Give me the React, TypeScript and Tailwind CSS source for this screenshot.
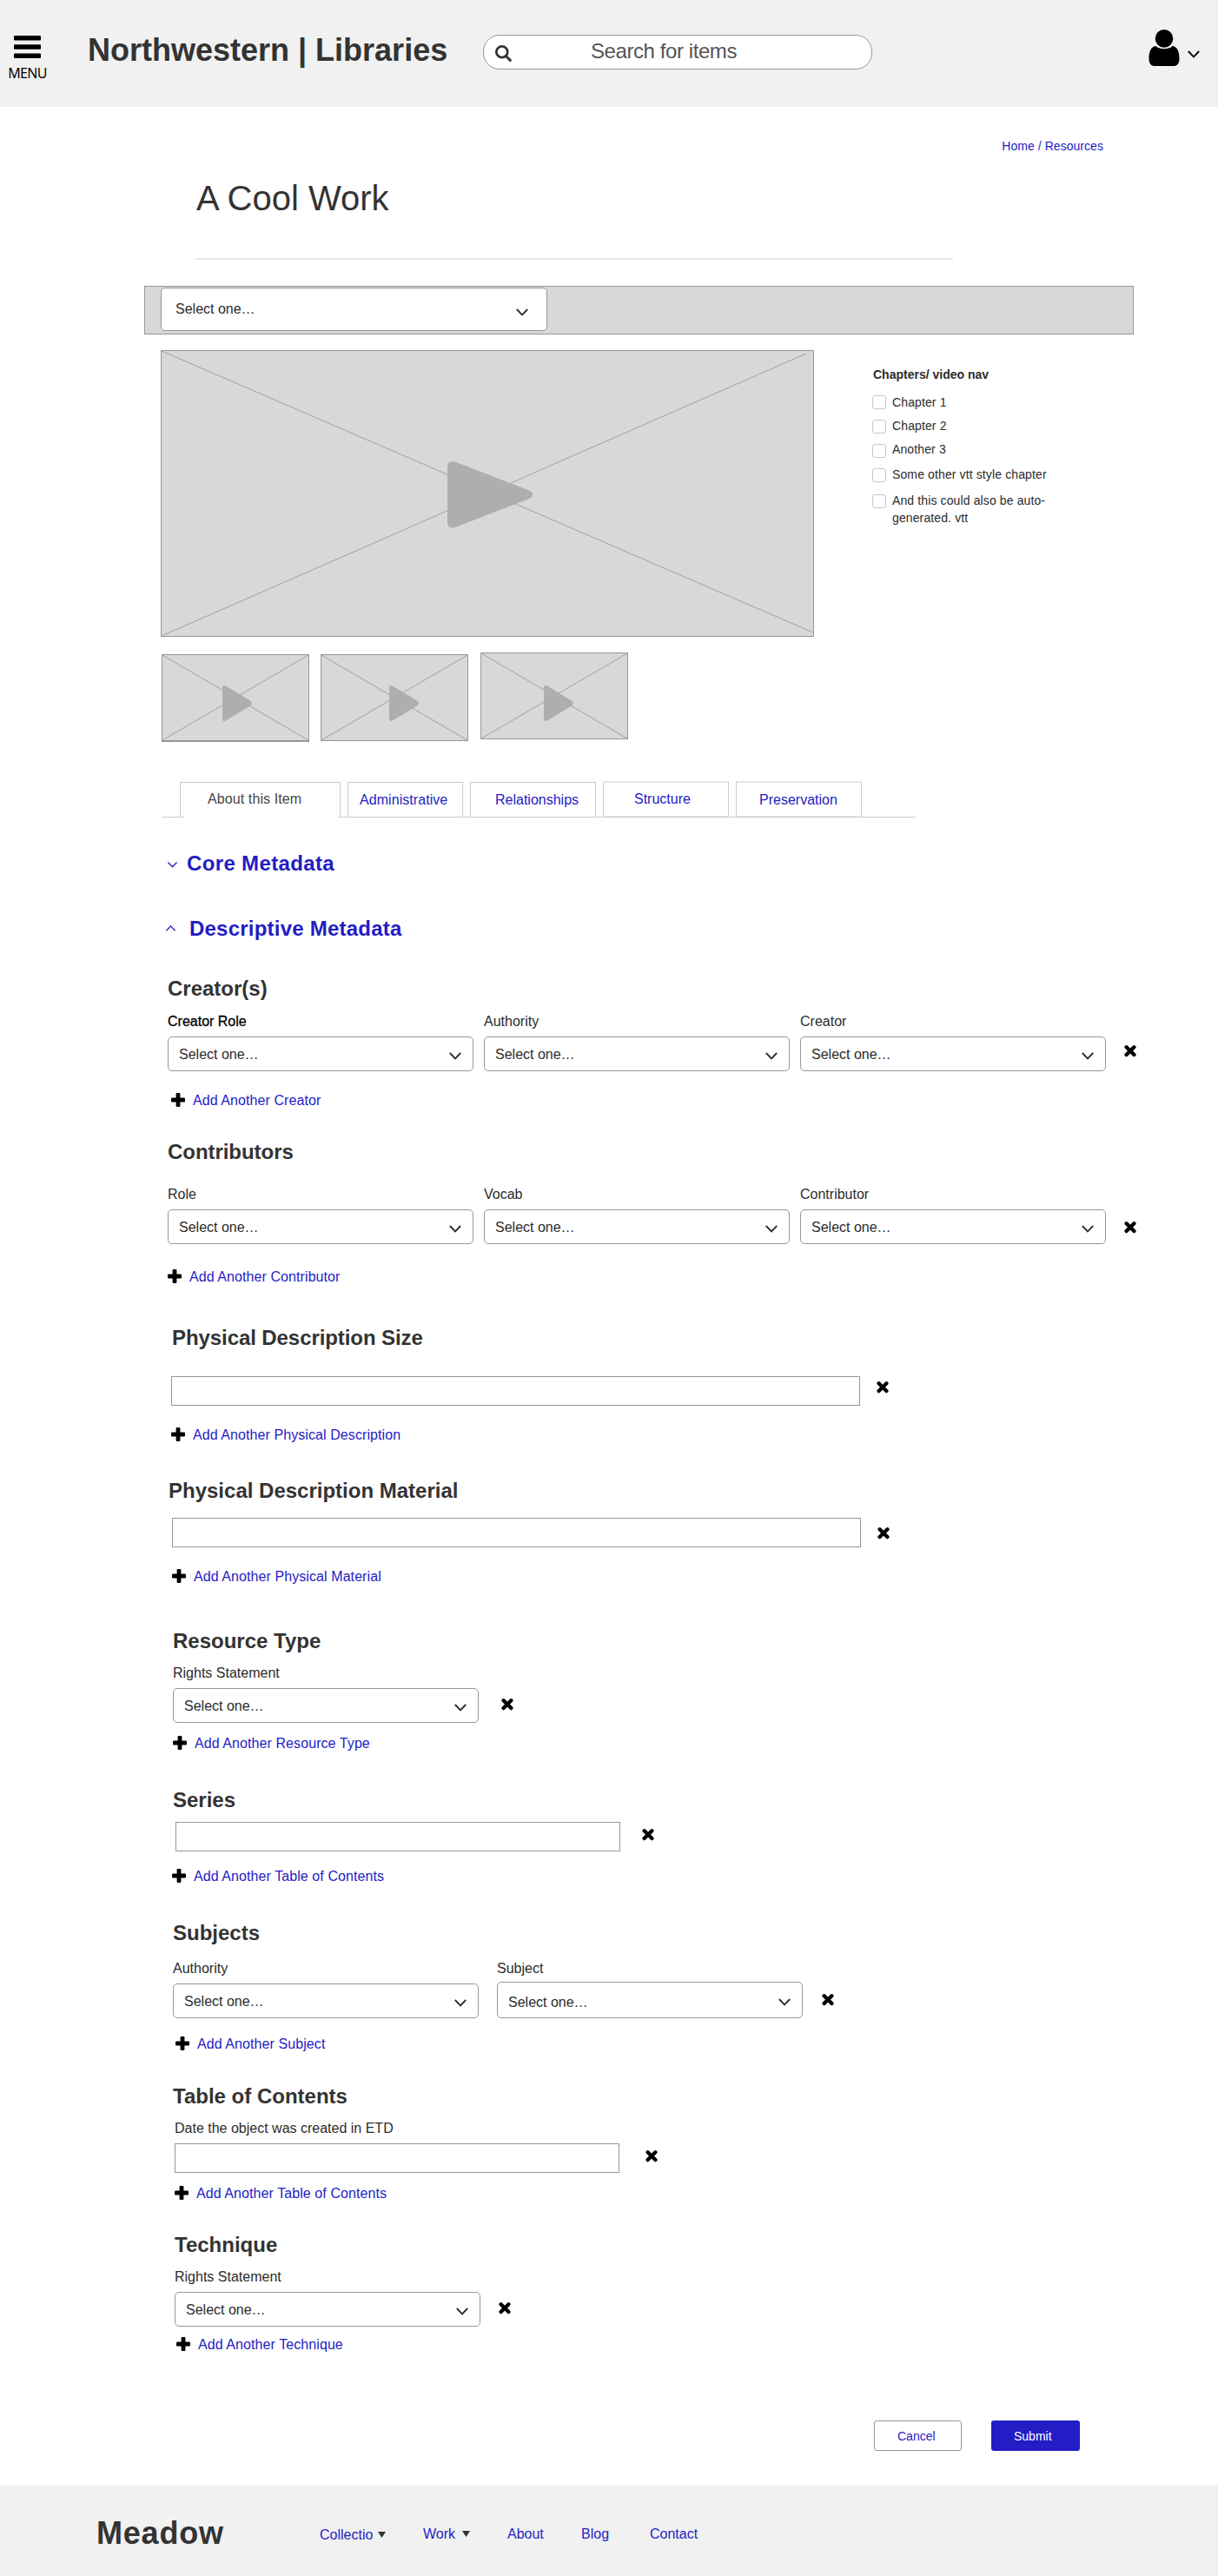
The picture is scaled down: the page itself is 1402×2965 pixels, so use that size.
import type { ReactNode } from "react";

function Chevron({ className = "" }: { className?: string }) {
  return (
    <svg className={`shrink-0 ${className}`} width="14" height="9" viewBox="0 0 14 9" fill="none" stroke="currentColor" strokeWidth="1.8">
      <path d="M0.8 1 L7 7.4 L13.2 1" />
    </svg>
  );
}

function PlusIcon() {
  return (
    <svg className="mt-px shrink-0" width="16" height="16" viewBox="0 0 16 16" fill="#000">
      <rect x="5.6" y="0" width="4.8" height="16" rx="1.2" />
      <rect x="0" y="5.6" width="16" height="4.8" rx="1.2" />
    </svg>
  );
}

function RemoveIcon({ className }: { className: string }) {
  return (
    <svg className={`shrink-0 ${className}`} width="14" height="14" viewBox="0 0 14 14" fill="none" stroke="#000">
      <path d="M2.6 2.3 L11.4 11.1 M11.4 2.3 L2.6 11.1" strokeWidth="4.3" strokeLinecap="round" />
    </svg>
  );
}

function Heading({ className, children }: { className: string; children: ReactNode }) {
  return <h3 className={`text-[24px] leading-[27px] font-bold text-[#333] ${className}`}>{children}</h3>;
}

function Label({ children, className = "" }: { children: ReactNode; className?: string }) {
  return <div className={`text-[16px] leading-[19px] ${className}`}>{children}</div>;
}

function Select({
  box = "h-10 w-[352px] pt-[10px] pr-[13px]",
  chevron = "mt-[7px]",
}: {
  box?: string;
  chevron?: string;
}) {
  return (
    <div className={`flex items-start justify-between rounded-[5px] border border-[#979797] bg-white pl-3 text-[16px] leading-[19px] ${box}`}>
      <span>Select one…</span>
      <Chevron className={chevron} />
    </div>
  );
}

function Field({ label, labelClass, children, className = "gap-2" }: { label: string; labelClass?: string; children: ReactNode; className?: string }) {
  return (
    <div className={`flex flex-col ${className}`}>
      <Label className={labelClass}>{label}</Label>
      {children}
    </div>
  );
}

function AddLink({ className, children }: { className: string; children: ReactNode }) {
  return (
    <a className={`flex items-start gap-[9px] text-[16px] leading-[19px] tracking-[0.08px] text-[#241cc4] ${className}`}>
      <PlusIcon />
      <span>{children}</span>
    </a>
  );
}

function Play({ d, className, size }: { d: string; className: string; size: [number, number] }) {
  return (
    <svg className={`absolute ${className}`} width={size[0]} height={size[1]} viewBox={`0 0 ${size[0]} ${size[1]}`}>
      <path d={d} fill="#aeaeae" />
    </svg>
  );
}

const smallPlay = "M0 2 Q0 0 2 0 Q3 0 4.2 .8 L32 17.4 Q36 20.5 32 23.6 L4.2 40.2 Q3 41 2 41 Q0 41 0 39 Z";
const largePlay = "M0 6 Q0 0 6 0 Q8 0 10 1 L93 33 Q98.5 36 98.5 38.3 Q98.5 41 93 43.6 L10 75.6 Q8 76.6 6 76.6 Q0 76.6 0 70.6 Z";

function Thumb({ box, play }: { box: string; play: string }) {
  return (
    <div className={`relative w-[170px] border border-[#979797] bg-[#d8d8d8] ${box}`}>
      <svg className="block" width="168" height="98" viewBox="0 0 168 98" stroke="#a0a0a0" strokeWidth="1">
        <path d="M0 0 L168 98 M0 98 L168 0" />
      </svg>
      <Play className={play} size={[35, 41]} d={smallPlay} />
    </div>
  );
}

function Spacer({ className }: { className: string }) {
  return <div className={`h-px bg-[#ccc] ${className}`} />;
}

function Tab({ className, children }: { className: string; children: ReactNode }) {
  return (
    <div className={`flex items-start border-[#ccc] text-[16px] leading-[19px] text-[#241cc4] ${className}`}>{children}</div>
  );
}

function Chapter({ row, box, text = "", children }: { row: string; box: string; text?: string; children: ReactNode }) {
  return (
    <div className={`flex items-start gap-[7px] ${row}`}>
      <span className={`size-4 shrink-0 rounded-[3px] border border-[#c8c8c8] bg-white ${box}`} />
      <span className={`text-[14px] tracking-[0.12px] whitespace-nowrap ${text || "leading-4"}`}>{children}</span>
    </div>
  );
}

function Caret({ className }: { className: string }) {
  return (
    <svg className={className} width="9" height="7" viewBox="0 0 9 7">
      <path d="M0 0 H9 L4.5 7 Z" fill="#333" />
    </svg>
  );
}

export default function App() {
  return (
    <div className="flex min-h-[2965px] w-[1402px] flex-col overflow-hidden bg-white font-['Liberation_Sans',Arial,sans-serif] text-[#2b2b2b]">
      <header className="flex h-[123px] items-start bg-[#f1f1f1]">
        <div className="mt-[41px] ml-[8px] flex w-[47px] flex-col items-center">
          <svg width="31" height="27" viewBox="0 0 31 27" fill="#000">
            <rect width="31" height="5.4" rx="1" />
            <rect y="10.3" width="31" height="5.4" rx="1" />
            <rect y="20.6" width="31" height="5.4" rx="1" />
          </svg>
          <span className="mt-[6px] font-['Noto_Sans',sans-serif] text-[16px] leading-[20px] tracking-[-0.7px] text-black">MENU</span>
        </div>
        <h1 className="mt-[37px] ml-[46px] w-[455px] text-[36px] leading-[41px] font-bold whitespace-nowrap text-[#333]">
          Northwestern | Libraries
        </h1>
        <div className="mt-10 flex h-10 w-[448px] items-start rounded-[19px] border border-[#979797] bg-white">
          <svg className="mt-[11px] ml-[13px]" width="19" height="19" viewBox="0 0 19 19" fill="none" stroke="#333">
            <circle cx="7.8" cy="7.8" r="6.4" strokeWidth="2.8" />
            <path d="M12.6 12.8 L17.3 17.4" strokeWidth="3" strokeLinecap="round" />
          </svg>
          <span className="mt-[4px] ml-[91px] text-[24px] leading-[27px] tracking-[-0.42px] text-[#555]">Search for items</span>
        </div>
        <svg className="mt-[34px] ml-[318px]" width="36" height="42" viewBox="0 0 36 42" fill="#000">
          <ellipse cx="18" cy="10.4" rx="10.3" ry="10.4" />
          <path d="M8.5 19 C11.5 23.2 24.5 23.2 27.5 19 C32.5 19.3 35.5 24.5 35.5 33.5 C35.5 39 33 42 29.5 42 H6.5 C3 42 .5 39 .5 33.5 C.5 24.5 3.5 19.3 8.5 19 Z" />
        </svg>
        <Chevron className="mt-[58px] ml-[9px] text-black" />
      </header>

      <nav className="mt-[37px] mr-[132px] self-end text-[14px] leading-4 tracking-[0.05px] text-[#241cc4]">Home / Resources</nav>
      <h2 className="mt-[30px] ml-[226px] text-[40px] leading-[44px] text-[#333]">A Cool Work</h2>
      <div className="mt-[47px] ml-[225px] h-[2px] w-[872px] bg-[#e6e6e6]" />

      <div className="mt-[30px] ml-[166px] h-14 w-[1139px] border border-[#979797] bg-[#d8d8d8] pt-px pl-[18px]">
        <Select box="h-[50px] w-[445px] pt-[14px] pl-4 pr-[21px]" chevron="mt-[9px]" />
      </div>

      <div className="mt-[18px] ml-[185px] flex h-[330px] items-start">
        <div className="relative h-[330px] w-[752px] border border-[#979797] bg-[#d8d8d8]">
          <svg className="block" width="750" height="328" viewBox="0 0 750 328" stroke="#a0a0a0">
            <path d="M0 0 L750 324 M0 328 L742 3" />
          </svg>
          <Play className="top-[127px] left-[329px]" size={[99, 77]} d={largePlay} />
        </div>
        <div className="mt-5 ml-[67px]">
          <div className="ml-px h-8 text-[14px] leading-4 font-bold">Chapters/ video nav</div>
          <Chapter row="h-[27px]" box="">Chapter 1</Chapter>
          <Chapter row="h-[27px]" box="mt-px">Chapter 2</Chapter>
          <Chapter row="h-[29px]" box="mt-[2px]">Another 3</Chapter>
          <Chapter row="h-[30px]" box="mt-px">Some other vtt style chapter</Chapter>
          <Chapter row="" box="mt-px" text="-mt-[2px] leading-5">
            And this could also be auto-
            <br />
            generated. vtt
          </Chapter>
        </div>
      </div>

      <div className="mt-[18px] ml-[186px] flex h-[103px] items-start">
        <Thumb box="mt-[2px] h-[101px] border-b-2" play="top-[35px] left-[69px]" />
        <Thumb box="mt-[2px] ml-[13px] h-[100px]" play="top-[35px] left-[78px]" />
        <Thumb box="ml-[14px] h-[100px]" play="top-[37px] left-[72px]" />
      </div>

      <div className="mt-[45px] ml-[187px] flex h-[42px] items-end">
        <Spacer className="w-5" />
        <div className="flex h-[41px] w-[185px] flex-col justify-between border-t border-[#ccc]">
          <div className="h-[39px] border-x border-[#ccc] pt-[9px] pl-[31px] text-[16px] leading-[19px] tracking-[0.1px] text-[#444]">About this Item</div>
          <div className="flex justify-between">
            <Spacer className="w-[5px]" />
            <Spacer className="w-[3px]" />
          </div>
        </div>
        <Spacer className="w-2" />
        <Tab className="h-[41px] w-[133px] border pt-[10px] pl-[13px] tracking-[0.06px]">Administrative</Tab>
        <Spacer className="w-2" />
        <Tab className="h-[41px] w-[145px] border pt-[10px] pl-[28px]">Relationships</Tab>
        <Spacer className="w-2" />
        <Tab className="h-[42px] w-[145px] border border-t-2 border-t-[#e6e6e6] pt-[9px] pl-[35px] shadow-[inset_0_-1px_#e6e6e6]">Structure</Tab>
        <Spacer className="w-2" />
        <Tab className="h-[42px] w-[145px] border border-t-2 border-t-[#e6e6e6] pt-[10px] pl-[26px] shadow-[inset_0_-1px_#e6e6e6]">Preservation</Tab>
        <Spacer className="w-[62px]" />
      </div>

      <div className="mt-[39px] ml-[193px] flex items-start text-[24px] leading-[27px] font-bold tracking-[0.35px] text-[#241cc4]">
        <svg className="mt-3 mr-[11px]" width="11" height="7" viewBox="0 0 11 7" fill="none" stroke="currentColor" strokeWidth="1.3">
          <path d="M.4 .5 L5.5 5.8 L10.6 .5" />
        </svg>
        Core Metadata
      </div>
      <div className="mt-12 ml-[191px] flex items-start text-[24px] leading-[27px] font-bold tracking-[0.22px] text-[#241cc4]">
        <svg className="mt-[10px] mr-[16px]" width="11" height="7" viewBox="0 0 11 7" fill="none" stroke="currentColor" strokeWidth="1.3">
          <path d="M.4 6.2 L5.5 .9 L10.6 6.2" />
        </svg>
        Descriptive Metadata
      </div>

      <Heading className="mt-[42px] ml-[193px]">Creator(s)</Heading>
      <div className="mt-[15px] ml-[193px] flex items-start gap-3">
        <Field label="Creator Role" labelClass="text-black [-webkit-text-stroke:0.3px_black]"><Select /></Field>
        <Field label="Authority"><Select /></Field>
        <Field label="Creator"><Select /></Field>
        <RemoveIcon className="mt-[37px] ml-[9px]" />
      </div>
      <AddLink className="mt-6 ml-[197px]">Add Another Creator</AddLink>

      <Heading className="mt-9 ml-[193px] tracking-[-0.05px]">Contributors</Heading>
      <div className="mt-[26px] ml-[193px] flex items-start gap-3">
        <Field label="Role"><Select /></Field>
        <Field label="Vocab"><Select /></Field>
        <Field label="Contributor"><Select /></Field>
        <RemoveIcon className="mt-[41px] ml-[9px]" />
      </div>
      <AddLink className="mt-7 ml-[193px]">Add Another Contributor</AddLink>

      <Heading className="mt-[47px] ml-[198px] tracking-[-0.08px]">Physical Description Size</Heading>
      <div className="mt-[31px] ml-[197px] flex items-start">
        <div className="h-[34px] w-[793px] border border-[#979797]" />
        <RemoveIcon className="mt-[6px] ml-[19px]" />
      </div>
      <AddLink className="mt-6 ml-[197px]">Add Another Physical Description</AddLink>

      <Heading className="mt-[41px] ml-[194px]">Physical Description Material</Heading>
      <div className="mt-[18px] ml-[198px] flex items-start">
        <div className="h-[34px] w-[793px] border border-[#979797]" />
        <RemoveIcon className="mt-[11px] ml-[19px]" />
      </div>
      <AddLink className="mt-6 ml-[198px]">Add Another Physical Material</AddLink>

      <Heading className="mt-[51px] ml-[199px]">Resource Type</Heading>
      <div className="mt-[14px] ml-[199px] flex items-start">
        <Field label="Rights Statement"><Select /></Field>
        <RemoveIcon className="mt-[39px] ml-[26px]" />
      </div>
      <AddLink className="mt-[14px] ml-[199px]">Add Another Resource Type</AddLink>

      <Heading className="mt-[42px] ml-[199px]">Series</Heading>
      <div className="mt-3 ml-[202px] flex items-start">
        <div className="h-[34px] w-[512px] border border-[#979797]" />
        <RemoveIcon className="mt-2 ml-[25px]" />
      </div>
      <AddLink className="mt-[19px] ml-[198px]">Add Another Table of Contents</AddLink>

      <Heading className="mt-[42px] ml-[199px]">Subjects</Heading>
      <div className="mt-[18px] ml-[199px] flex items-start">
        <Field label="Authority"><Select /></Field>
        <div className="ml-[21px]">
          <Field label="Subject" className="gap-[6px]">
            <Select box="h-[42px] w-[352px] pt-[13px] pr-[13px]" chevron="mt-[5px]" />
          </Field>
        </div>
        <RemoveIcon className="mt-[39px] ml-[22px]" />
      </div>
      <AddLink className="mt-5 ml-[202px]">Add Another Subject</AddLink>

      <Heading className="mt-[37px] ml-[199px]">Table of Contents</Heading>
      <Label className="mt-[14px] ml-[201px]">Date the object was created in ETD</Label>
      <div className="mt-2 ml-[201px] flex items-start">
        <div className="h-[34px] w-[512px] border border-[#979797]" />
        <RemoveIcon className="mt-2 ml-[30px]" />
      </div>
      <AddLink className="mt-[14px] ml-[201px]">Add Another Table of Contents</AddLink>

      <Heading className="mt-9 ml-[201px]">Technique</Heading>
      <div className="mt-[14px] ml-[201px] flex items-start">
        <Field label="Rights Statement"><Select /></Field>
        <RemoveIcon className="mt-[39px] ml-[21px]" />
      </div>
      <AddLink className="mt-[11px] ml-[203px]">Add Another Technique</AddLink>

      <div className="mt-[78px] mr-[159px] flex gap-[34px] self-end text-[14px] leading-4">
        <button className="flex h-[35px] w-[101px] rounded-[3px] border border-[#979797] bg-white pt-[9px] pl-[26px] text-[#241cc4]">Cancel</button>
        <button className="flex h-[35px] w-[102px] rounded-[3px] bg-[#241cc4] pt-[10px] pl-[26px] text-white">Submit</button>
      </div>

      <footer className="mt-10 flex h-[104px] items-start bg-[#f1f1f1] text-[16px] leading-[19px] text-[#241cc4]">
        <div className="mt-[34px] ml-[111px] w-[257px] text-[36px] leading-[41px] font-bold tracking-[0.8px] text-[#333]">Meadow</div>
        <div className="mt-[47px] flex w-[119px] items-start">
          <span className="w-[67px]">Collectio</span>
          <Caret className="mt-[6px]" />
        </div>
        <div className="mt-[46px] flex w-[97px] items-start">
          <span className="w-[45px]">Work</span>
          <Caret className="mt-[6px]" />
        </div>
        <span className="mt-[46px] w-[85px]">About</span>
        <span className="mt-[46px] w-[79px]">Blog</span>
        <span className="mt-[46px]">Contact</span>
      </footer>
    </div>
  );
}
